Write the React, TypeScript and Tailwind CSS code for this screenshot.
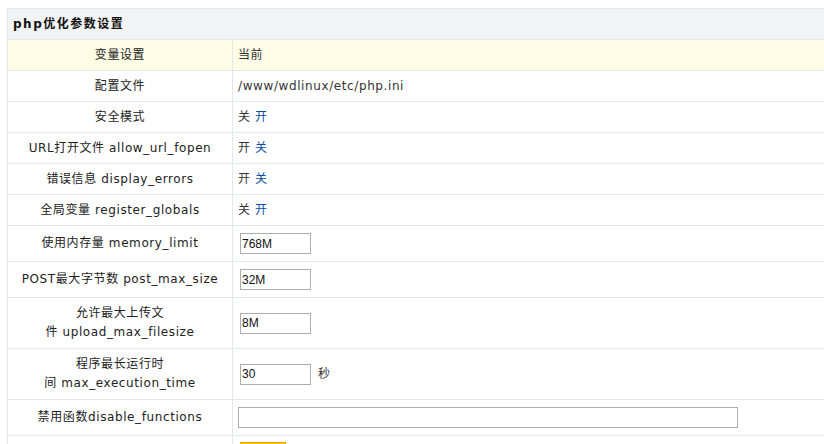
import type { ReactNode } from "react";

const font = "font-['DejaVu_Sans','Noto_Sans_CJK_SC',sans-serif]";

function Row({ label, h = "h-[31px]", bg = "", children }: { label: ReactNode; h?: string; bg?: string; children?: ReactNode }) {
  return (
    <div className={`flex ${h} ${bg} border-b border-[#e3e6ea]`}>
      <div className="w-[225px] shrink-0 border-r border-[#e3e6ea] flex items-center justify-center text-center leading-[19px] text-[#222] tracking-[0.6px] px-1">
        {label}
      </div>
      <div className="flex-1 flex items-center pl-[5px] text-[#333] tracking-[0.6px]">{children}</div>
    </div>
  );
}

function Toggle({ on, off }: { on: string; off: string }) {
  return (
    <span>
      {on} <a href="#" className="text-[#0b4d9e]">{off}</a>
    </span>
  );
}

function Field({ value, w = "w-[71px]", ml = "ml-[2px]" }: { value: string; w?: string; ml?: string }) {
  return (
    <input
      defaultValue={value}
      className={`${w} ${ml} h-[21px] border border-[#adadad] px-[1px] font-['Liberation_Sans',Arial,sans-serif] text-[12px] tracking-normal text-[#111] outline-none`}
    />
  );
}

export default function App() {
  return (
    <div className={`min-h-screen bg-white overflow-hidden pt-[8px] pl-[7px] text-[12px] ${font}`}>
      <div className="w-[830px] border-t border-l border-[#e3e6ea]">
        {/* Header */}
        <div className="h-[31px] bg-[#f2f3f5] border-b border-[#e3e6ea] flex items-center pl-[5px] font-bold tracking-[1.5px] text-[#111]">
          php优化参数设置
        </div>

        <Row label="变量设置" bg="bg-[#fffde6]">当前</Row>
        <Row label="配置文件">/www/wdlinux/etc/php.ini</Row>
        <Row label="安全模式"><Toggle on="关" off="开" /></Row>
        <Row label="URL打开文件 allow_url_fopen"><Toggle on="开" off="关" /></Row>
        <Row label="错误信息 display_errors"><Toggle on="开" off="关" /></Row>
        <Row label="全局变量 register_globals"><Toggle on="关" off="开" /></Row>
        <Row label="使用内存量 memory_limit" h="h-[36px]"><Field value="768M" /></Row>
        <Row label="POST最大字节数 post_max_size" h="h-[36px]"><Field value="32M" /></Row>
        <Row
          label={
            <span>
              允许最大上传文
              <br />
              件 upload_max_filesize
            </span>
          }
          h="h-[51px]"
        >
          <Field value="8M" />
        </Row>
        <Row
          label={
            <span>
              程序最长运行时
              <br />
              间 max_execution_time
            </span>
          }
          h="h-[51px]"
        >
          <Field value="30" />
          <span className="ml-[7px]">秒</span>
        </Row>
        <Row label="禁用函数disable_functions" h="h-[36px]">
          <Field value="" w="w-[500px]" ml="ml-0" />
        </Row>

        {/* Submit */}
        <div className="flex h-[9px]">
          <div className="w-[225px] shrink-0 border-r border-[#e3e6ea]" />
          <div className="flex-1 pl-[7px] pt-[6px]">
            <button className="block w-[46px] h-[22px] bg-[#ffc20e] border border-[#f0a400]" aria-label="保存" />
          </div>
        </div>
      </div>
    </div>
  );
}
